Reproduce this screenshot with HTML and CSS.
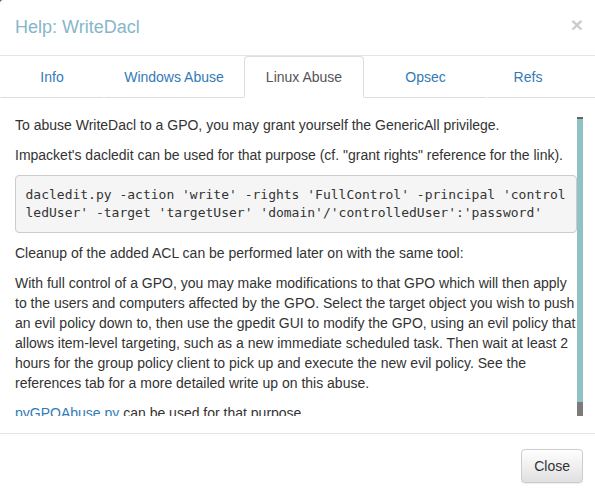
FILE: index.html
```html
<!DOCTYPE html>
<html>
<head>
<meta charset="utf-8">
<link rel="stylesheet" href="styles.css">
</head>
<body>
<div class="modal">
  <div class="modal-header">
    <button class="close" type="button">&times;</button>
    <h4 class="modal-title">Help: WriteDacl</h4>
  </div>
  <ul class="tabs">
    <li class="tab"><a>Info</a></li>
    <li class="tab"><a>Windows Abuse</a></li>
    <li class="tab active"><a>Linux Abuse</a></li>
    <li class="tab"><a>Opsec</a></li>
    <li class="tab last"><a>Refs</a></li>
  </ul>
  <div class="modal-body">
    <div class="scroller">
      <p>To abuse WriteDacl to a GPO, you may grant yourself the GenericAll privilege.</p>
      <p>Impacket's dacledit can be used for that purpose (cf. "grant rights" reference for the link).</p>
      <pre class="code">dacledit.py -action 'write' -rights 'FullControl' -principal 'controlledUser' -target 'targetUser' 'domain'/'controlledUser':'password'</pre>
      <p>Cleanup of the added ACL can be performed later on with the same tool:</p>
      <p>With full control of a GPO, you may make modifications to that GPO which will then apply to the users and computers affected by the GPO. Select the target object you wish to push an evil policy down to, then use the gpedit GUI to modify the GPO, using an evil policy that allows item-level targeting, such as a new immediate scheduled task. Then wait at least 2 hours for the group policy client to pick up and execute the new evil policy. See the references tab for a more detailed write up on this abuse.</p>
      <p><a class="link">pyGPOAbuse.py</a> can be used for that purpose.</p>
    </div>
    <div class="scrollbar"><div class="thumb"></div></div>
  </div>
  <div class="modal-footer">
    <button class="btn" type="button">Close</button>
  </div>
</div>
</body>
</html>
```

FILE: styles.css
```css
html, body {
  margin: 0;
  padding: 0;
  overflow: hidden;
  background: #4a4a4a;
}
body {
  width: 595px;
  height: 498px;
  font-family: "Liberation Sans", Arial, sans-serif;
  font-size: 14px;
  line-height: 20px;
  color: #333;
}
.modal {
  width: 598px;
  height: 498px;
  background: #fff;
  border-radius: 3px 0 0 0;
  display: flex;
  flex-direction: column;
  box-sizing: border-box;
}
.modal-header {
  padding: 15px;
  border-bottom: 1px solid #e5e5e5;
  height: 56px;
  box-sizing: border-box;
}
.modal-title {
  margin: 0;
  font-size: 18px;
  font-weight: normal;
  line-height: 24px;
  color: #86b6ca;
}
.close {
  float: right;
  background: none;
  border: 0;
  padding: 0;
  margin-top: -1px;
  font-family: "Liberation Sans", Arial, sans-serif;
  font-size: 21px;
  font-weight: bold;
  line-height: 21px;
  color: #000;
  opacity: 0.2;
}
.tabs {
  list-style: none;
  margin: 0;
  padding: 0;
  display: grid;
  grid-template-columns: 104px 140px 120px 123px 1fr;
}
.tab a {
  display: block;
  padding: 10px 15px;
  text-align: center;
  color: #337ab7;
  border: 1px solid transparent;
  border-bottom: 1px solid #ddd;
  border-radius: 4px 4px 0 0;
}
.tab.last a {
  padding-right: 44px;
}
.tab.active a {
  color: #555;
  border-color: #ddd;
  border-bottom-color: #fff;
}
.modal-body {
  padding: 17px 15px 0 15px;
  height: 335px;
  box-sizing: border-box;
  display: flex;
  align-items: flex-start;
}
.scroller {
  flex: 1;
  height: 301px;
  overflow: hidden;
}
.scrollbar {
  width: 6px;
  height: 299px;
  margin-top: 2px;
  background: linear-gradient(to bottom, #a0a0a0, #7a7a7a);
  display: flex;
  flex-direction: column;
}
.thumb {
  height: 283px;
  background: #8fc2c5;
  border-top: 2px solid #666;
}
p {
  margin: 0 0 10px;
}
.code {
  margin: 0 0 10px;
  padding: 9.5px;
  font-family: "DejaVu Sans Mono", "Liberation Mono", monospace;
  font-size: 13px;
  line-height: 18.5px;
  color: #333;
  background: #f5f5f5;
  border: 1px solid #ccc;
  border-radius: 4px;
  white-space: pre-wrap;
  word-break: break-all;
}
.link {
  color: #337ab7;
}
.modal-footer {
  border-top: 1px solid #e5e5e5;
  padding: 15px;
  display: flex;
  justify-content: flex-end;
}
.btn {
  font-family: "Liberation Sans", Arial, sans-serif;
  font-size: 14px;
  line-height: 20px;
  color: #333;
  padding: 6px 12px;
  border: 1px solid #ccc;
  border-radius: 4px;
  background: linear-gradient(to bottom, #fff 0%, #e0e0e0 100%);
  box-shadow: inset 0 1px 0 rgba(255,255,255,.15), 0 1px 1px rgba(0,0,0,.075);
}
```
